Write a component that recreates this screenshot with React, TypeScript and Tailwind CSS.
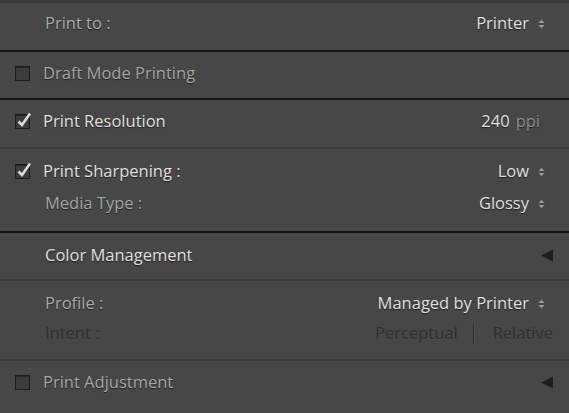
import React from "react";

const Spinner = () => (
  <svg width="7" height="10" viewBox="0 0 7 10" className="ml-[9px] shrink-0">
    <path d="M0.5 4 L3.5 0.8 L6.5 4 Z" fill="#9a9a9a" />
    <path d="M0.5 6 L3.5 9.2 L6.5 6 Z" fill="#9a9a9a" />
  </svg>
);

const Tri = () => (
  <svg width="12" height="13" viewBox="0 0 12 13" className="shrink-0">
    <path d="M12 0.5 L0 6.5 L12 12.5 Z" fill="#1e1e1e" />
  </svg>
);

const Check = ({ checked }: { checked?: boolean }) => (
  <div className="relative w-[15px] h-[15px] shrink-0 border border-[#1c1c1c] bg-[#3c3c3c] shadow-[inset_0_1px_1px_rgba(0,0,0,0.4)]">
    {checked && (
      <svg width="18" height="18" viewBox="0 0 18 18" className="absolute left-[-1px] top-[-4px]">
        <path d="M3.5 10.5 L7 14 L15 2.5" stroke="#dadada" strokeWidth="2.6" fill="none" strokeLinejoin="miter" />
      </svg>
    )}
  </div>
);

const sh = "[text-shadow:0_1px_1px_rgba(0,0,0,0.6)]";
const dim = "text-[#2e2e2e] [text-shadow:0_1px_0_rgba(255,255,255,0.07)]";

export default function App() {
  return (
    <div
      className="w-[569px] h-[413px] overflow-hidden bg-[#474747] text-[16.5px] leading-none flex flex-col"
      style={{ fontFamily: '"Segoe UI", "Open Sans", "Noto Sans", sans-serif' }}
    >
      {/* Print to */}
      <div className="h-[52px] shrink-0 flex items-center pb-[6px] pl-[45px] pr-[24px] border-t-[3px] border-[#3a3a3a] border-b-2 border-b-[#141414]">
        <span className={`text-[#ababab] ${sh}`}>Print to :</span>
        <div className="ml-auto flex items-center">
          <span className={`text-[#e0e0e0] ${sh}`}>Printer</span>
          <Spinner />
        </div>
      </div>
      {/* Draft */}
      <div className="h-[48px] shrink-0 flex items-center pb-[3px] pl-[15px] border-b-2 border-[#141414]">
        <Check />
        <span className={`ml-[13px] text-[#a6a6a6] ${sh}`}>Draft Mode Printing</span>
      </div>
      {/* Resolution */}
      <div className="h-[49px] shrink-0 flex items-center pb-[4px] pl-[15px] pr-[29px] border-b-2 border-[#3b3b3b]">
        <Check checked />
        <span className={`ml-[13px] text-[#e0e0e0] ${sh}`}>Print Resolution</span>
        <div className="ml-auto flex items-center gap-[6px]">
          <span className={`text-[#e0e0e0] ${sh}`}>240</span>
          <span className={`text-[#8e8e8e] ${sh}`}>ppi</span>
        </div>
      </div>
      {/* Sharpening */}
      <div className="h-[84px] shrink-0 flex flex-col justify-center gap-[15px] pb-[5px] pl-[15px] pr-[24px] border-b-2 border-[#141414]">
        <div className="flex items-center h-[17px]">
          <Check checked />
          <span className={`ml-[13px] text-[#e0e0e0] ${sh}`}>Print Sharpening :</span>
          <div className="ml-auto flex items-center">
            <span className={`text-[#e0e0e0] ${sh}`}>Low</span>
            <Spinner />
          </div>
        </div>
        <div className="flex items-center h-[17px] pl-[30px]">
          <span className={`text-[#a6a6a6] ${sh}`}>Media Type :</span>
          <div className="ml-auto flex items-center">
            <span className={`text-[#e0e0e0] ${sh}`}>Glossy</span>
            <Spinner />
          </div>
        </div>
      </div>
      {/* Color management */}
      <div className="h-[48px] shrink-0 flex items-center pb-[1px] pl-[45px] pr-[16px] border-b-2 border-[#3b3b3b]">
        <span className={`text-[#e0e0e0] ${sh}`}>Color Management</span>
        <div className="ml-auto">
          <Tri />
        </div>
      </div>
      {/* Profile / Intent */}
      <div className="h-[80px] shrink-0 flex flex-col justify-center gap-[13px] pb-[3px] pl-[45px] pr-[16px] border-b-2 border-[#3b3b3b]">
        <div className="flex items-center h-[17px]">
          <span className={`text-[#ababab] ${sh}`}>Profile :</span>
          <div className="ml-auto flex items-center pr-[8px]">
            <span className={`text-[#e0e0e0] ${sh}`}>Managed by Printer</span>
            <Spinner />
          </div>
        </div>
        <div className="flex items-center h-[17px]">
          <span className={dim}>Intent :</span>
          <div className="ml-auto flex items-center">
            <span className={dim}>Perceptual</span>
            <div className="ml-[15px] mr-[19px] w-px h-[19px] bg-[#303030] shadow-[1px_0_0_rgba(255,255,255,0.05)]" />
            <span className={dim}>Relative</span>
          </div>
        </div>
      </div>
      {/* Print Adjustment */}
      <div className="flex-1 flex items-center pl-[15px] pr-[16px] pb-[10px]">
        <Check />
        <span className={`ml-[13px] text-[#a6a6a6] ${sh}`}>Print Adjustment</span>
        <div className="ml-auto">
          <Tri />
        </div>
      </div>
    </div>
  );
}
